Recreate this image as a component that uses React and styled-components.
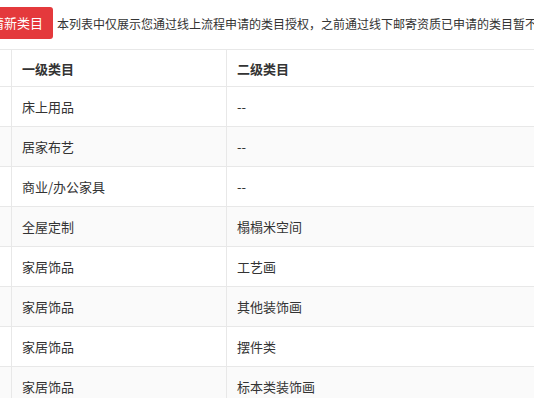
import React from "react";
import styled, {createGlobalStyle} from "styled-components";

const GlobalStyle = createGlobalStyle`
	html, body {
		margin: 0;
		padding: 0;
		background: #fff;
		overflow: hidden;
	}
	body {
		font-family: "Noto Sans CJK SC", "Liberation Sans", sans-serif;
		color: #333;
	}
`;

const rows = [
	{first: "床上用品", second: "--"},
	{first: "居家布艺", second: "--"},
	{first: "商业/办公家具", second: "--"},
	{first: "全屋定制", second: "榻榻米空间"},
	{first: "家居饰品", second: "工艺画"},
	{first: "家居饰品", second: "其他装饰画"},
	{first: "家居饰品", second: "摆件类"},
	{first: "家居饰品", second: "标本类装饰画"},
];

function App() {
	return (
		<Page>
			<GlobalStyle />
			<Toolbar>
				<ApplyButton>申请新类目</ApplyButton>
				<Notice>
					本列表中仅展示您通过线上流程申请的类目授权，之前通过线下邮寄资质已申请的类目暂不在此展示
				</Notice>
			</Toolbar>
			<Table>
				<thead>
					<tr>
						<HeadCell $w={43} />
						<HeadCell $w={215}>一级类目</HeadCell>
						<HeadCell>二级类目</HeadCell>
					</tr>
				</thead>
				<tbody>
					{rows.map((row, i) => (
						<Row key={i} $striped={i % 2 === 1}>
							<Cell />
							<Cell>{row.first}</Cell>
							<Cell>{row.second}</Cell>
						</Row>
					))}
				</tbody>
			</Table>
		</Page>
	);
}

export default App;

const Page = styled.div`
	width: 900px;
	margin-left: -32px;
`;

const Toolbar = styled.div`
	display: flex;
	align-items: center;
	height: 32px;
	padding-top: 7px;
	padding-bottom: 10px;
	white-space: nowrap;
`;

const ApplyButton = styled.button`
	height: 32px;
	padding: 0 10px;
	border: none;
	border-radius: 3px;
	background-color: #e4393c;
	color: #fff;
	font-family: inherit;
	font-size: 13px;
	line-height: 32px;
	cursor: pointer;
	margin-right: 4px;
`;

const Notice = styled.span`
	font-size: 12px;
	color: #333;
`;

const Table = styled.table`
	width: 900px;
	border-collapse: collapse;
	table-layout: fixed;
	font-size: 13px;
	border-top: 1px solid #e8e8e8;
`;

const HeadCell = styled.th`
	width: ${(p) => (p.$w ? `${p.$w}px` : "auto")};
	height: 37px;
	padding: 0 10px;
	text-align: left;
	font-weight: 600;
	color: #333;
	border-bottom: 1px solid #e8e8e8;
	border-left: 1px solid #e8e8e8;
	box-sizing: border-box;
`;

const Row = styled.tr`
	background-color: ${(p) => (p.$striped ? "#fafafa" : "#fff")};
`;

const Cell = styled.td`
	height: 39px;
	padding: 0 10px;
	color: #333;
	border-bottom: 1px solid #e8e8e8;
	border-left: 1px solid #e8e8e8;
	white-space: nowrap;
`;
